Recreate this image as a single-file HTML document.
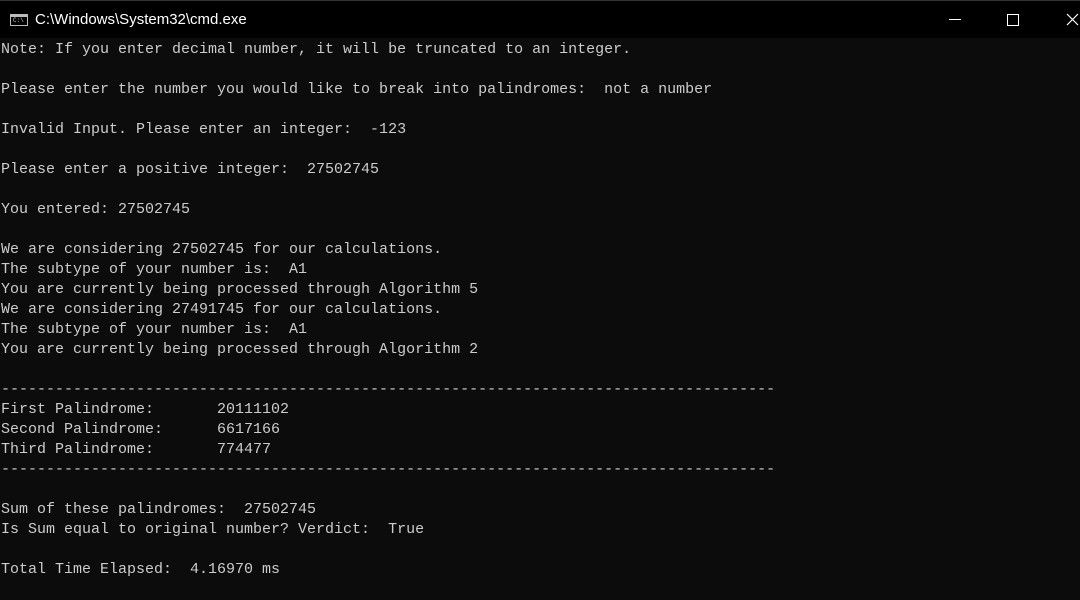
<!DOCTYPE html>
<html><head><meta charset="utf-8"><style>
html,body{margin:0;padding:0;width:1080px;height:600px;overflow:hidden;background:#0c0c0c}
.tb{position:absolute;left:0;top:0;width:1080px;height:38px;background:#000;border-top:1px solid #333;box-sizing:border-box}
.title{position:absolute;left:35px;top:10px;color:#fff;font:15px "Liberation Sans",sans-serif}
.ic{position:absolute;left:10px;top:13px;width:18px;height:12px;border:1px solid #bbb;box-sizing:border-box;background:#000}
.ic:before{content:"";position:absolute;left:0;top:0;right:0;height:2px;background:#bbb}
.ic span{position:absolute;left:2px;top:2px;color:#ccc;font:6px "Liberation Mono",monospace}
.min{position:absolute;left:949px;top:18px;width:12px;height:1px;background:#fff}
.max{position:absolute;left:1007px;top:13px;width:10px;height:10px;border:1px solid #fff}
pre{position:absolute;left:1px;top:40px;margin:0;color:#cccccc;font:15px/20px "Liberation Mono",monospace;white-space:pre}
</style></head><body>
<div class="tb">
<div class="ic"><span>C:\</span></div>
<div class="title">C:\Windows\System32\cmd.exe</div>
<div class="min"></div><div class="max"></div>
<svg style="position:absolute;left:1066px;top:12px" width="13" height="13"><path d="M1 1L12 12M12 1L1 12" stroke="#fff" stroke-width="1.2"/></svg>
</div>
<pre>Note: If you enter decimal number, it will be truncated to an integer.

Please enter the number you would like to break into palindromes:  not a number

Invalid Input. Please enter an integer:  -123

Please enter a positive integer:  27502745

You entered: 27502745

We are considering 27502745 for our calculations.
The subtype of your number is:  A1
You are currently being processed through Algorithm 5
We are considering 27491745 for our calculations.
The subtype of your number is:  A1
You are currently being processed through Algorithm 2

--------------------------------------------------------------------------------------
First Palindrome:       20111102
Second Palindrome:      6617166
Third Palindrome:       774477
--------------------------------------------------------------------------------------

Sum of these palindromes:  27502745
Is Sum equal to original number? Verdict:  True

Total Time Elapsed:  4.16970 ms</pre>
</body></html>
